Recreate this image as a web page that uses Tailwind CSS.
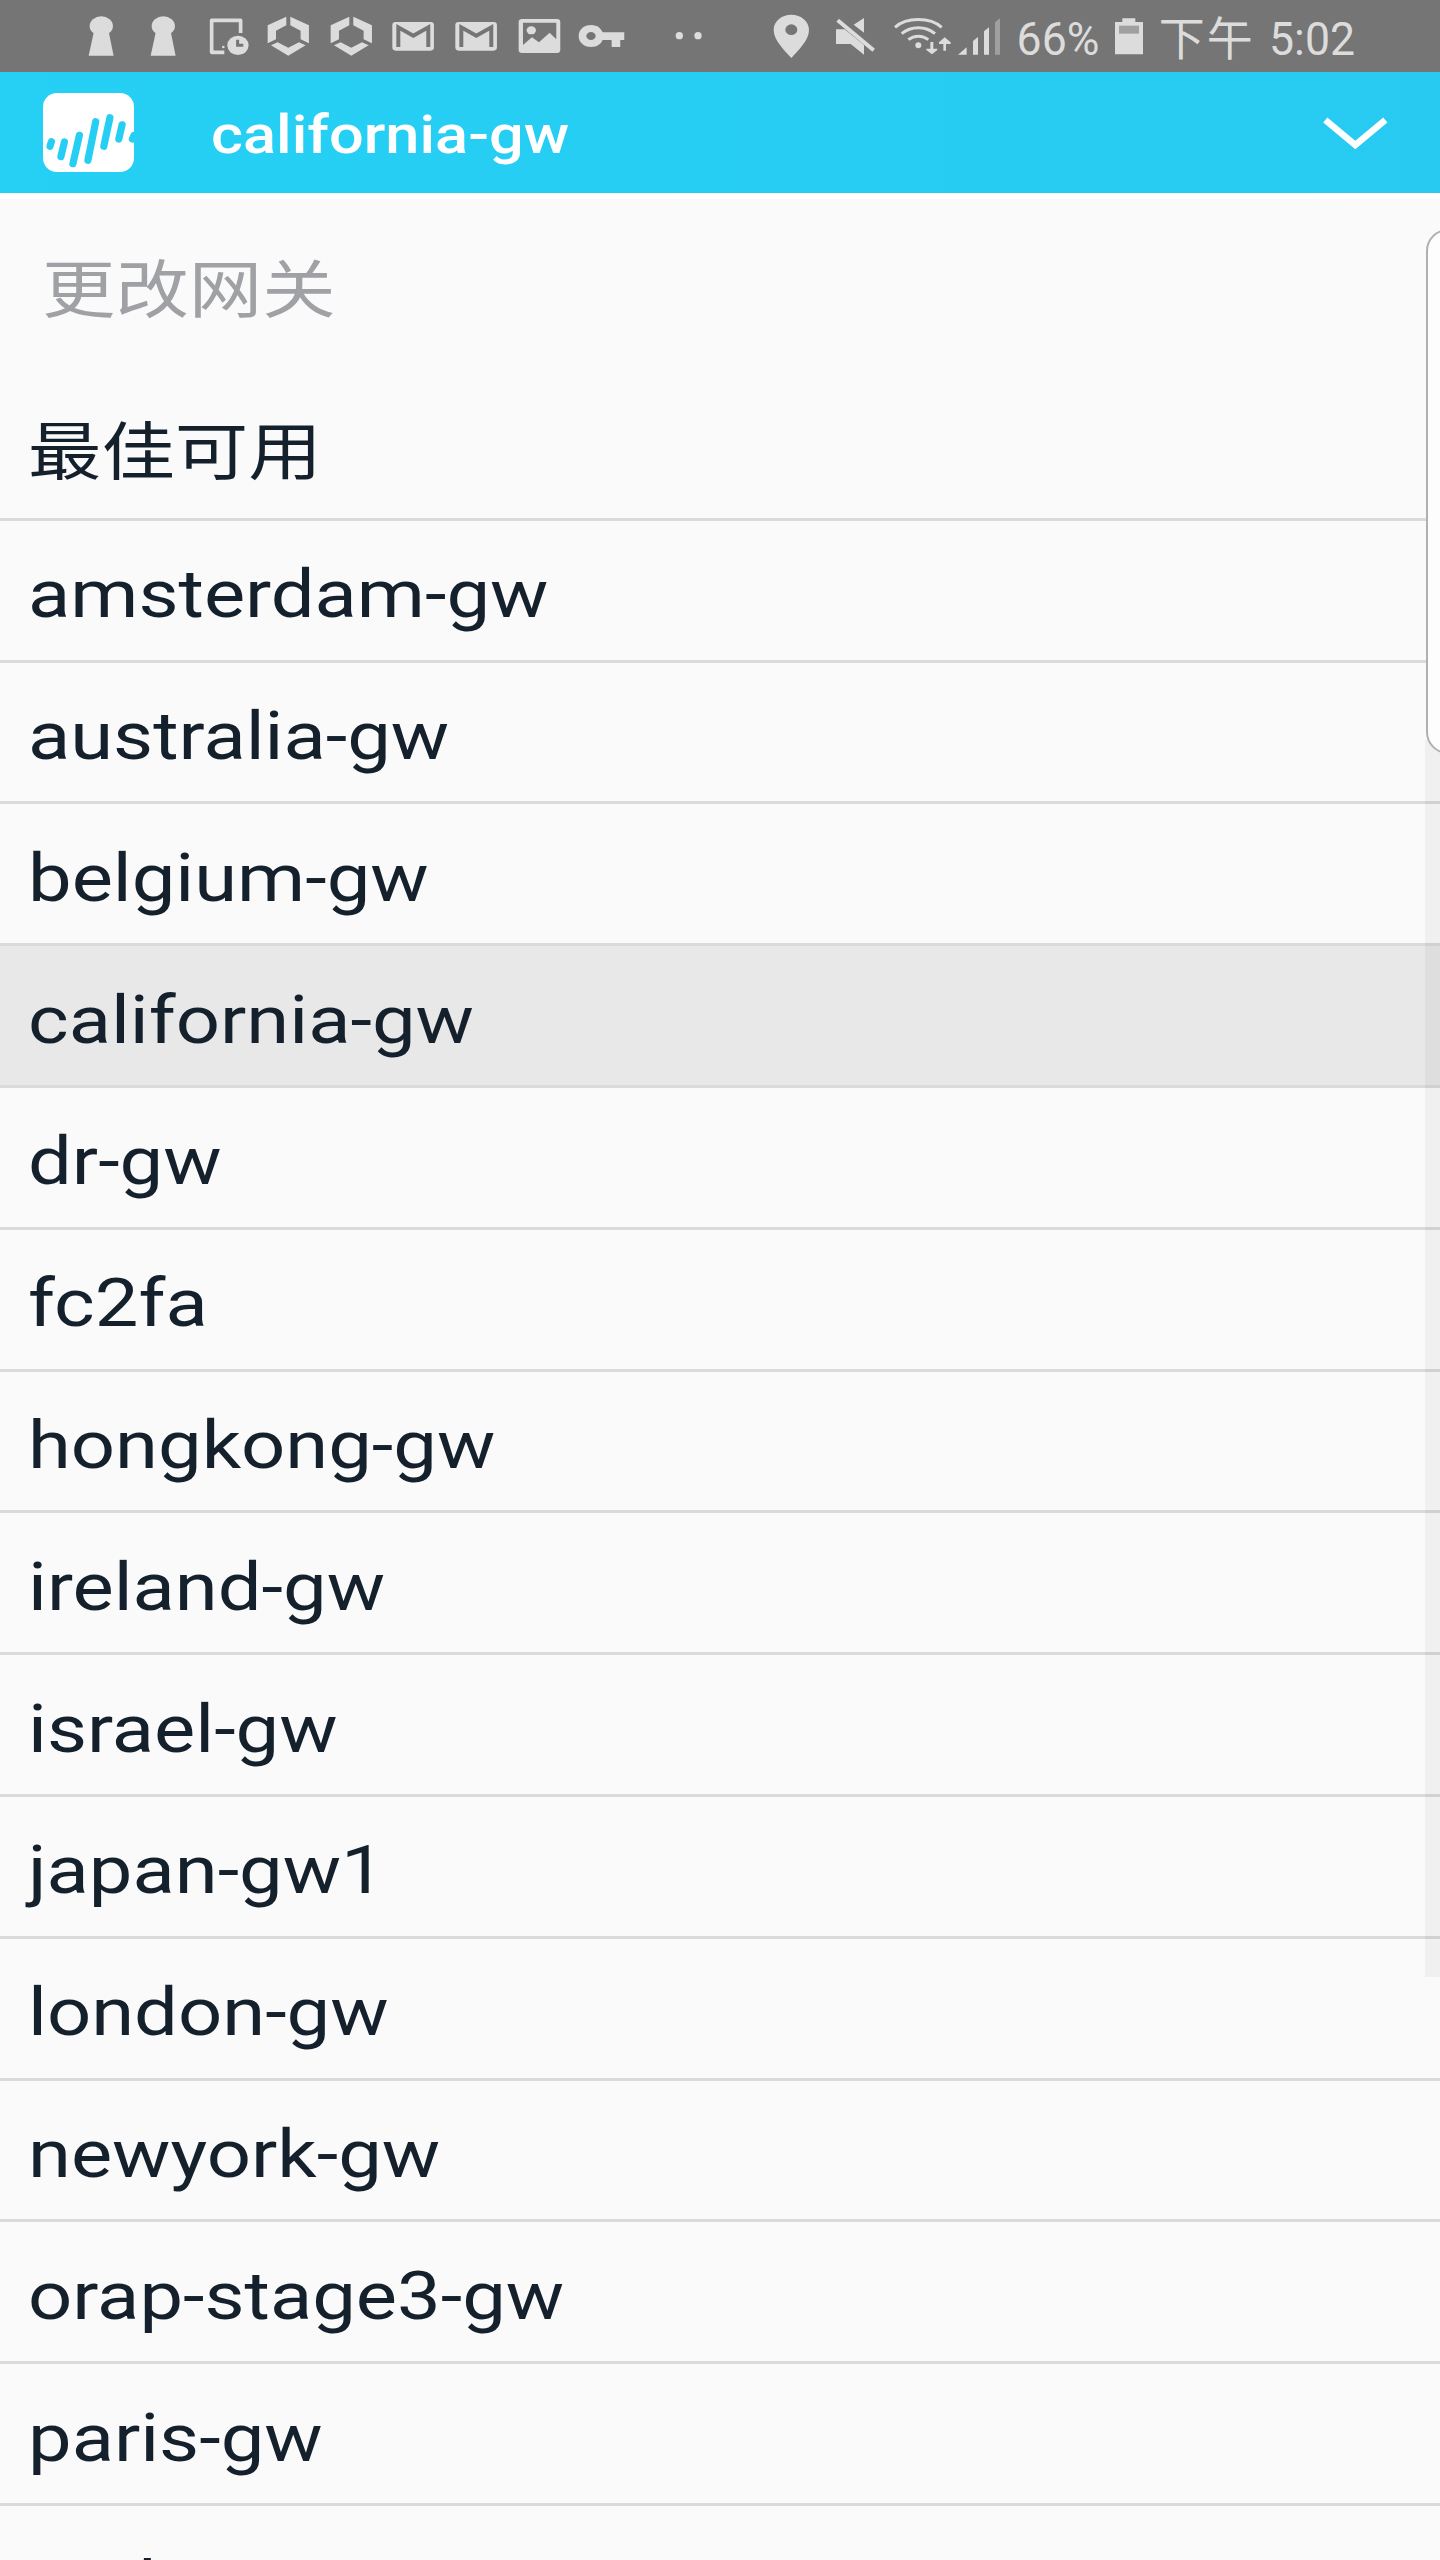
<!DOCTYPE html>
<html lang="zh-CN">
<head>
    <meta charset="UTF-8">
    <meta name="viewport" content="width=device-width, initial-scale=1.0">
    <title>california-gw</title>
    <script src="https://cdn.jsdelivr.net/npm/@tailwindcss/browser@4"></script>
    <style>
        body {
            font-family: Roboto, "Noto Sans CJK SC", sans-serif;
        }
    </style>
</head>
<body class="bg-[#fafafa]">
    <!-- Shared status icons -->
    <svg class="hidden">
        <symbol id="keyhole" viewBox="0 0 188 216">
            <ellipse cx="94" cy="78" rx="35" ry="29"/>
            <path d="M72 94H116L131 167H56Z"/>
        </symbol>
        <symbol id="hexagon" viewBox="592 0 188 216">
            <path d="M680 50V76L649 92V118L624 130V76ZM692 50V76L723 92V118L748 130V76ZM634 136L654 127L686 143L718 127L738 136L686 167Z"/>
        </symbol>
        <symbol id="gmail" viewBox="8 0 188 216">
            <rect x="39" y="66" width="125" height="86" rx="10"/>
            <path d="M57 141V82L102 107L147 82V141" fill="none" stroke="#757575" stroke-width="12"/>
        </symbol>
    </svg>

    <div class="relative w-[1440px] h-[2560px] overflow-hidden bg-[#fafafa]">
        <!-- Status bar -->
        <div class="flex items-center h-[72px] pl-[69.5px] bg-[#757575] text-[#dcdcdc] fill-[#dcdcdc]">
            <svg class="w-[62.6px] h-[72px] shrink-0"><use href="#keyhole"/></svg>
            <svg class="w-[62.6px] h-[72px] shrink-0"><use href="#keyhole"/></svg>
            <svg class="w-[62.6px] h-[72px] shrink-0" viewBox="404 0 188 216">
                <path d="M541 99V61H454V157H492" fill="none" stroke="currentColor" stroke-width="11" stroke-linejoin="round"/>
                <circle cx="489" cy="141" r="4"/>
                <ellipse cx="533" cy="136" rx="32" ry="29"/>
                <path d="M532 119V136H549" fill="none" stroke="#757575" stroke-width="9"/>
            </svg>
            <svg class="w-[62.6px] h-[72px] shrink-0"><use href="#hexagon"/></svg>
            <svg class="w-[62.6px] h-[72px] shrink-0"><use href="#hexagon"/></svg>
            <svg class="w-[62.6px] h-[72px] shrink-0"><use href="#gmail"/></svg>
            <svg class="w-[62.6px] h-[72px] shrink-0"><use href="#gmail"/></svg>
            <svg class="w-[62.6px] h-[72px] shrink-0" viewBox="383 0 188 216">
                <rect x="415" y="57" width="125" height="102" rx="10"/>
                <path d="M428 68H528V118L508 98L476 127L455 112L428 135Z" fill="#757575"/>
                <ellipse cx="453" cy="91" rx="14" ry="12"/>
            </svg>
            <svg class="w-[62.6px] h-[72px] shrink-0" viewBox="571 0 188 216">
                <path fill-rule="evenodd" d="M634 75C655 75 664 86 669 97H734V120H722V141H696V120H669C664 131 655 141 634 141C613 141 597 127 597 108S613 75 634 75ZM634 96A14 12 0 1 0 634 120A14 12 0 1 0 634 96Z"/>
            </svg>
            <svg class="w-[60px] h-[72px] ml-[25px] shrink-0" viewBox="834 0 180 216">
                <circle cx="898" cy="107" r="11"/>
                <circle cx="954" cy="107" r="11"/>
            </svg>
            <svg class="w-[44px] h-[72px] ml-[52px] shrink-0" viewBox="60 0 132 216">
                <path fill-rule="evenodd" d="M124 44C154 44 177 64 177 90C177 122 142 153 124 174C106 153 71 122 71 90C71 64 94 44 124 44ZM124 73A18 16 0 1 0 124 105A18 16 0 1 0 124 73Z"/>
            </svg>
            <svg class="w-[70px] h-[72px] shrink-0" viewBox="192 0 210 216">
                <path d="M258 88H284L342 135V164L302 132H258ZM342 54V98L311 74Z"/>
                <path d="M263 61L371 151" fill="none" stroke="currentColor" stroke-width="12"/>
            </svg>
            <svg class="w-[70px] h-[72px] shrink-0" viewBox="402 0 210 216">
                <g fill="none" stroke="currentColor" stroke-width="9">
                    <path d="M435 82C470 51 540 51 575 82"/>
                    <path d="M455 101C483 77 527 77 555 101"/>
                    <path d="M475 119C493 105 517 105 535 119"/>
                </g>
                <circle cx="505" cy="136" r="9"/>
                <path d="M541 126H550V146H562V150L546 163L529 150V146H541ZM580 152V132H567V127L584 112L602 127V132H588V152Z"/>
            </svg>
            <svg class="w-[50px] h-[72px] shrink-0" viewBox="612 0 150 216">
                <path d="M624 164L650 142V164ZM669 123L684 111V164H669ZM702 94L717 82V164H702Z"/>
                <path d="M735 67L750 55V164H735Z" fill="#a0a0a0"/>
            </svg>
            <span class="w-[109px] pl-[13px] shrink-0 text-[46px] whitespace-nowrap origin-left scale-x-[0.97] pt-[6px]">66%</span>
            <svg class="w-[32px] h-[72px] shrink-0" viewBox="189 0 96 216">
                <path d="M195 66H217V55H256V66H279V163H195Z"/>
                <rect x="207" y="77" width="60" height="24" fill="#a0a0a0"/>
            </svg>
            <span class="w-[124.5px] pl-[14px] shrink-0 text-[46px] tracking-[2px] whitespace-nowrap pt-[6px]">下午</span>
            <span class="shrink-0 text-[46px] whitespace-nowrap origin-left scale-x-[0.97] pt-[6px]">5:02</span>
        </div>

        <!-- Header -->
        <header class="flex items-center justify-between h-[121px] pl-[43px] pr-[52px] bg-linear-to-r from-[#25d0f4] to-[#28caf2]">
            <div class="flex items-center">
                <svg class="w-[91px] h-[79px]" viewBox="43 93 91 79">
                    <rect x="43" y="93" width="91" height="79" rx="14" fill="#fff"/>
                    <g stroke="#27cef3" stroke-width="7.2" stroke-linecap="round">
                        <path d="M51.4 141.7L50 146.3"/>
                        <path d="M64.4 142L60.9 156.7"/>
                        <path d="M79.4 135.3L72.9 163.7"/>
                        <path d="M95.7 121.7L87.9 160.3"/>
                        <path d="M109.9 117.7L103.8 146.3"/>
                        <path d="M122.1 124.8L118.8 139"/>
                        <path d="M134 135.5L132.4 139"/>
                    </g>
                </svg>
                <h1 class="ml-[77px] pt-[5px] text-[54px] leading-none font-medium text-white origin-left scale-x-[1.135] whitespace-nowrap">california-gw</h1>
            </div>
            <svg class="w-[66px] h-[36px] mt-[2px]" viewBox="1322 116 66 36" fill="none" stroke="#fff" stroke-width="6.5">
                <path d="M1325.3 120L1355.3 145L1385.3 120"/>
            </svg>
        </header>

        <main>
            <h2 class="h-[186px] pt-[47px] pl-[42px] border-t-[6px] border-white text-[63px] leading-[90px] text-[#9fa1a5]">
                <span class="inline-block origin-left scale-x-[1.165]">更改网关</span>
            </h2>
            <ul id="gateways" class="text-[66.7px] text-[#14202b]"></ul>
        </main>

        <!-- Scrollbar -->
        <div class="absolute top-[740px] right-0 w-[15px] h-[1237px] bg-black/4"></div>
        <div class="absolute top-[229px] -right-[30px] w-[44.5px] h-[525px] rounded-[22px] border-2 border-[#b0b0b0] bg-[#fdfdfd]"></div>
    </div>

    <script>
        const gateways = [
            '最佳可用', 'amsterdam-gw', 'australia-gw', 'belgium-gw', 'california-gw',
            'dr-gw', 'fc2fa', 'hongkong-gw', 'ireland-gw', 'israel-gw', 'japan-gw1',
            'london-gw', 'newyork-gw', 'orap-stage3-gw', 'paris-gw', 'qa-t-gw'
        ];
        const selected = 'california-gw';

        document.getElementById('gateways').innerHTML = gateways.map((name, i) => `
            <li class="flex items-center h-[141.8px] pl-[27.5px] border-b-[3px] border-[#dadada] ${name === selected ? 'bg-[#e8e8e8]' : ''}">
                <span class="origin-left scale-x-[1.165] whitespace-nowrap ${i === 0 ? 'text-[63px] pt-[10px]' : 'pt-[8px]'}">${name}</span>
            </li>`).join('');
    </script>
</body>
</html>
